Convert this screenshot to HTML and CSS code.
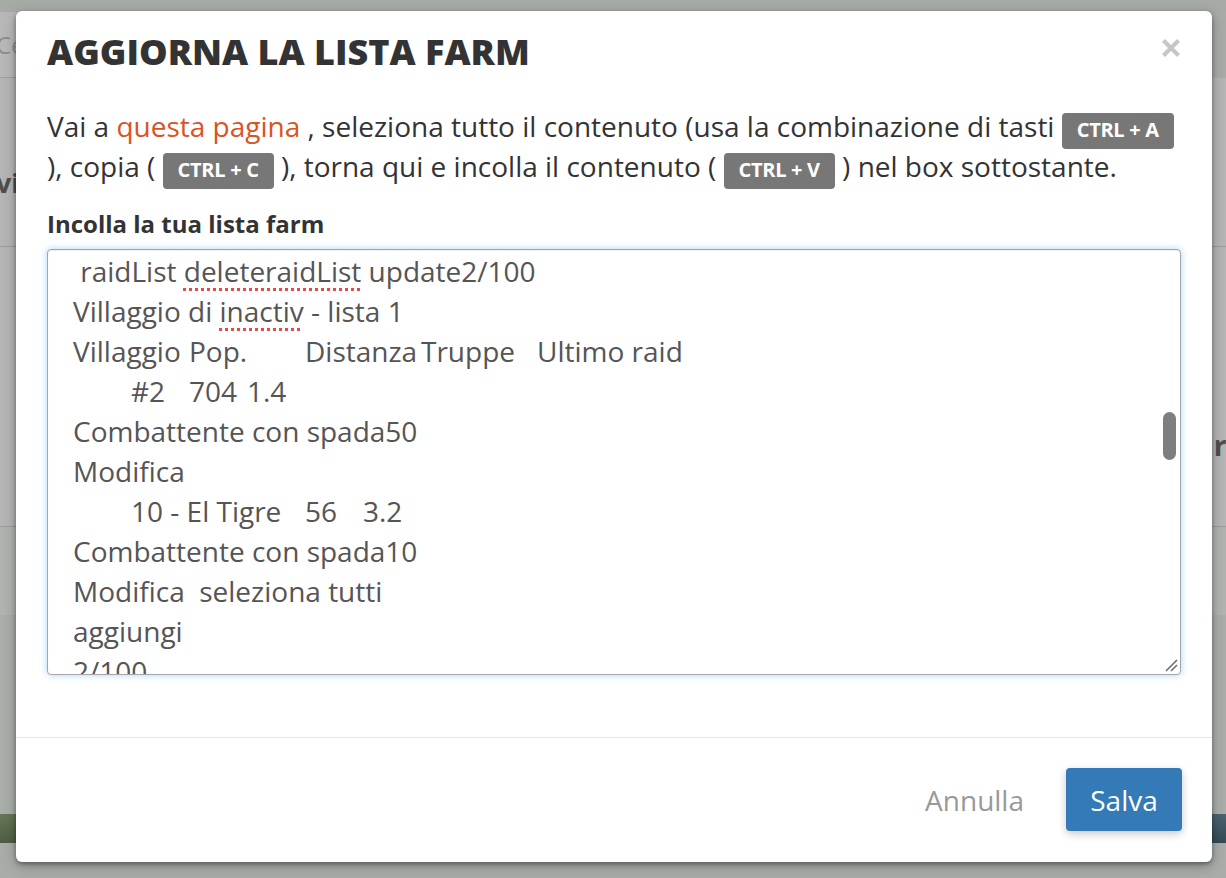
FILE: index.html
```html
<!DOCTYPE html>
<html lang="it">
<head>
<meta charset="utf-8">
<title>Aggiorna la lista farm</title>
<link rel="stylesheet" href="styles.css">
</head>
<body>
<div class="page">
  <div class="page-top"></div>
  <div class="page-search">
    <div class="search-box"><span>Cerca</span></div>
    <div class="search-rest"></div>
  </div>
  <div class="page-panel">
    <div class="panel-row panel-row-a"><span class="panel-title">vi</span></div>
    <div class="panel-row panel-row-b"><span class="panel-side">rm</span></div>
    <div class="panel-row panel-row-c"></div>
  </div>
  <div class="page-gap"></div>
  <div class="page-footer">
    <div class="footer-green"></div>
    <div class="footer-mid"></div>
    <div class="footer-teal"></div>
  </div>
</div>

<div class="modal" role="dialog" aria-labelledby="modal-title">
  <div class="modal-header">
    <h2 id="modal-title" class="modal-title">Aggiorna la lista farm</h2>
    <button class="close" type="button" aria-label="Chiudi">
      <svg width="20" height="20" viewBox="0 0 20 20" aria-hidden="true"><path d="M2.5 2.5 L17.5 17.5 M17.5 2.5 L2.5 17.5" stroke="currentColor" stroke-width="4.2" stroke-linecap="butt"/></svg>
    </button>
  </div>
  <div class="modal-body">
    <p class="intro">Vai a <a href="#" class="link">questa pagina</a> , seleziona tutto il contenuto (usa la combinazione di tasti <kbd class="key">CTRL + A</kbd> ), copia ( <kbd class="key">CTRL + C</kbd> ), torna qui e incolla il contenuto ( <kbd class="key">CTRL + V</kbd> ) nel box sottostante.</p>
    <label class="field-label" for="farm-list">Incolla la tua lista farm</label>
    <div class="textbox" id="farm-list" role="textbox" aria-multiline="true">
      <div class="textbox-content"> raidList <span class="spell">deleteraidList</span> update2/100
Villaggio di <span class="spell">inactiv</span> - lista 1
Villaggio	Pop. 	Distanza	Truppe	Ultimo raid
	#2	704	1.4
Combattente con spada50
Modifica
	10 - El Tigre	56	3.2
Combattente con spada10
Modifica  seleziona tutti
aggiungi
2/100
0/100</div>
      <span class="scroll-thumb"></span>
      <svg class="grip" width="14" height="14" viewBox="0 0 14 14" aria-hidden="true"><path d="M2 13 L13 2 M7 13 L13 7" stroke="#6f6f6f" stroke-width="1.6"/></svg>
    </div>
  </div>
  <div class="modal-footer">
    <button class="btn btn-link" type="button">Annulla</button>
    <button class="btn btn-primary" type="button">Salva</button>
  </div>
</div>
</body>
</html>
```

FILE: styles.css
```css
* { box-sizing: border-box; }

html, body {
  margin: 0;
  padding: 0;
}

body {
  width: 1226px;
  height: 878px;
  overflow: hidden;
  background: #a8ada8;
  font-family: "Open Sans", "Liberation Sans", sans-serif;
  position: relative;
}

/* ---------- dimmed page behind ---------- */
.page {
  display: flex;
  flex-direction: column;
  height: 878px;
}

.page-top {
  height: 12px;
  background: #a6aba6;
}

.page-search {
  height: 66px;
  display: flex;
}

.search-box {
  width: 40px;
  background: #b7b8b7;
  border-bottom: 1px solid #9ea19e;
  display: flex;
  align-items: center;
  overflow: hidden;
}

.search-box span {
  font-size: 24px;
  color: #8d8f8d;
  margin-left: -4px;
  white-space: nowrap;
}

.search-rest {
  flex: 1;
  background: #a7aca7;
}

.page-panel {
  height: 537px;
  background: #b4b5b4;
  display: flex;
  flex-direction: column;
}

.panel-row {
  border-bottom: 1px solid #9b9c9b;
  display: flex;
  align-items: center;
  justify-content: space-between;
  overflow: hidden;
}

.panel-row-a { height: 169px; }
.panel-row-b { height: 280px; justify-content: flex-end; }
.panel-row-c { flex: 1; border-bottom: none; background: #b1b3b1; }

.panel-title {
  font-size: 27px;
  font-weight: 700;
  color: #4d4e4d;
  margin-left: -4px;
  margin-top: 40px;
}

.panel-side {
  font-size: 28px;
  font-weight: 700;
  color: #4d4e4d;
  margin-right: -28px;
  margin-top: 116px;
}

.page-gap {
  height: 199px;
  background: #a9aea9;
}

.page-footer {
  height: 29px;
  display: flex;
}

.footer-green {
  width: 40px;
  background: linear-gradient(#667657, #4f5e43);
}

.footer-mid {
  flex: 1;
  background: #56605a;
}

.footer-teal {
  width: 40px;
  background: linear-gradient(#4b6470, #354a55);
}

/* ---------- modal ---------- */
.modal {
  position: absolute;
  left: 16px;
  top: 11px;
  width: 1196px;
  height: 851px;
  background: #fff;
  border-radius: 6px;
  box-shadow: 0 2px 4px rgba(0, 0, 0, 0.35), 0 4px 14px rgba(0, 0, 0, 0.25);
  display: flex;
  flex-direction: column;
  color: #333;
}

.modal-header {
  display: flex;
  align-items: flex-start;
  justify-content: space-between;
  padding: 21px 31px 0 31px;
}

.modal-title {
  margin: 0;
  font-size: 36px;
  line-height: 40px;
  font-weight: 800;
  text-transform: uppercase;
  color: #333;
}

.close {
  border: 0;
  background: transparent;
  padding: 0;
  margin: 6px 0 0 0;
  color: #c6c6c6;
  cursor: pointer;
  display: flex;
}

.modal-body {
  padding: 34px 31px 0 31px;
  display: flex;
  flex-direction: column;
  flex: 1;
}

.intro {
  margin: 0;
  font-size: 28px;
  line-height: 40px;
  color: #333;
}

.link {
  color: #d9541e;
  text-decoration: none;
}

.key {
  display: inline;
  white-space: nowrap;
  font-family: "Open Sans", "Liberation Sans", sans-serif;
  font-size: 20px;
  font-weight: 700;
  line-height: 20px;
  padding: 2.6px 15px 6px;
  background: #777;
  color: #fff;
  border-radius: 4px;
  letter-spacing: -0.3px;
}

.field-label {
  display: block;
  margin-top: 24px;
  font-size: 24px;
  font-weight: 700;
  line-height: 28px;
  color: #333;
}

.textbox {
  position: relative;
  margin-top: 11px;
  height: 426px;
  border: 1px solid #a3a7ab;
  border-radius: 4px;
  box-shadow: inset 0 1px 1px rgba(0, 0, 0, 0.075), 0 0 7px rgba(102, 175, 233, 0.55);
  overflow: hidden;
  background: #fff;
}

.textbox-content {
  padding: 1px 25px 0;
  white-space: pre;
  tab-size: 58px;
  -moz-tab-size: 58px;
  font-size: 28px;
  line-height: 40px;
  color: #555;
}

.spell {
  text-decoration: underline dotted #e84a4a;
  text-decoration-thickness: 3px;
  text-underline-offset: 6px;
}

.scroll-thumb {
  position: absolute;
  right: 4px;
  top: 162px;
  width: 13px;
  height: 48px;
  border-radius: 7px;
  background: #7e7e7e;
}

.grip {
  position: absolute;
  right: 2px;
  bottom: 2px;
}

.modal-footer {
  border-top: 1px solid #e5e5e5;
  padding: 30px 30px 31px;
  display: flex;
  justify-content: flex-end;
  align-items: center;
  gap: 18px;
}

.btn {
  font-family: "Open Sans", "Liberation Sans", sans-serif;
  font-size: 28px;
  height: 63px;
  border-radius: 4px;
  border: 0;
  cursor: pointer;
}

.btn-link {
  background: transparent;
  color: #999;
  padding: 0 24px;
}

.btn-primary {
  background: #337ab7;
  color: #fff;
  padding: 0;
  width: 116px;
  box-shadow: 0 3px 8px rgba(0, 0, 0, 0.22);
}
```
